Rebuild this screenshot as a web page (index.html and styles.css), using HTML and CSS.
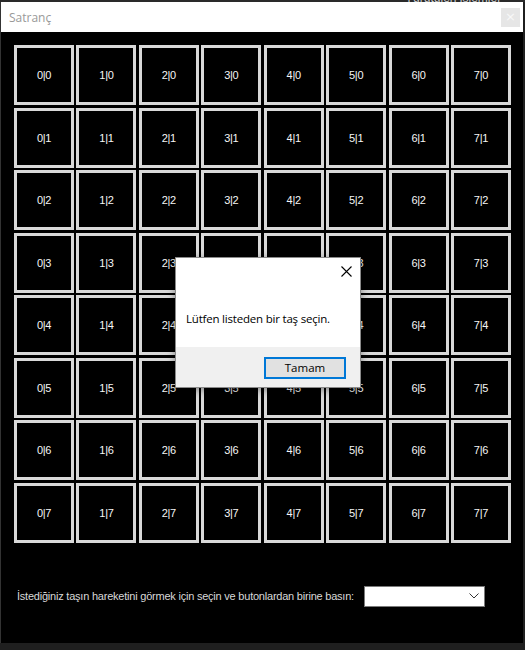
FILE: index.html
```html
<!DOCTYPE html>
<html lang="tr">
<head>
<meta charset="utf-8">
<title>Satranç</title>
<link rel="stylesheet" href="styles.css">
</head>
<body>
<div class="topstrip"><span class="peek">· Yürütülen işlemler</span></div>
<div class="window">
  <div class="titlebar">
    <span class="title">Satranç</span>
    <span class="closebtn">×</span>
  </div>
  <div class="client">
    <div class="board">
      <div class="cell">0|0</div><div class="cell">1|0</div><div class="cell">2|0</div><div class="cell">3|0</div><div class="cell">4|0</div><div class="cell">5|0</div><div class="cell">6|0</div><div class="cell">7|0</div>
      <div class="cell">0|1</div><div class="cell">1|1</div><div class="cell">2|1</div><div class="cell">3|1</div><div class="cell">4|1</div><div class="cell">5|1</div><div class="cell">6|1</div><div class="cell">7|1</div>
      <div class="cell">0|2</div><div class="cell">1|2</div><div class="cell">2|2</div><div class="cell">3|2</div><div class="cell">4|2</div><div class="cell">5|2</div><div class="cell">6|2</div><div class="cell">7|2</div>
      <div class="cell">0|3</div><div class="cell">1|3</div><div class="cell">2|3</div><div class="cell">3|3</div><div class="cell">4|3</div><div class="cell">5|3</div><div class="cell">6|3</div><div class="cell">7|3</div>
      <div class="cell">0|4</div><div class="cell">1|4</div><div class="cell">2|4</div><div class="cell">3|4</div><div class="cell">4|4</div><div class="cell">5|4</div><div class="cell">6|4</div><div class="cell">7|4</div>
      <div class="cell">0|5</div><div class="cell">1|5</div><div class="cell">2|5</div><div class="cell">3|5</div><div class="cell">4|5</div><div class="cell">5|5</div><div class="cell">6|5</div><div class="cell">7|5</div>
      <div class="cell">0|6</div><div class="cell">1|6</div><div class="cell">2|6</div><div class="cell">3|6</div><div class="cell">4|6</div><div class="cell">5|6</div><div class="cell">6|6</div><div class="cell">7|6</div>
      <div class="cell">0|7</div><div class="cell">1|7</div><div class="cell">2|7</div><div class="cell">3|7</div><div class="cell">4|7</div><div class="cell">5|7</div><div class="cell">6|7</div><div class="cell">7|7</div>
    </div>
    <div class="controls">
      <span class="label">İstediğiniz taşın hareketini görmek için seçin ve butonlardan birine basın:</span>
      <div class="combo">
        <svg class="chev" width="10" height="6" viewBox="0 0 10 6"><path d="M0.5 0.5 L5 5 L9.5 0.5" fill="none" stroke="#333" stroke-width="1"/></svg>
      </div>
    </div>
  </div>
</div>
<div class="dialog">
  <div class="dlg-body">
    <svg class="dlg-x" width="11" height="11" viewBox="0 0 11 11"><path d="M0.5 0.5 L10.5 10.5 M10.5 0.5 L0.5 10.5" stroke="#000" stroke-width="1.1"/></svg>
    <p class="dlg-msg">Lütfen listeden bir taş seçin.</p>
  </div>
  <div class="dlg-foot">
    <button class="dlg-btn">Tamam</button>
  </div>
</div>
</body>
</html>
```
FILE: styles.css
```css
html, body {
  margin: 0;
  padding: 0;
  background: #1f1f1f;
  width: 525px;
  height: 650px;
  overflow: hidden;
}
body {
  position: relative;
  font-family: "Liberation Sans", Arial, sans-serif;
}
.topstrip {
  height: 2px;
  background: #2a2a2a;
  position: relative;
  overflow: hidden;
}
.peek {
  position: absolute;
  left: 398px;
  top: -9px;
  font-size: 12px;
  color: #cfcfcf;
  white-space: nowrap;
}
.window {
  width: 522px;
  border-left: 1px solid #333;
}
.titlebar {
  height: 30px;
  background: #ffffff;
  display: flex;
  align-items: center;
  justify-content: space-between;
  padding: 0 3px 0 8px;
}
.title {
  font-family: "Open Sans", "Noto Sans", sans-serif;
  font-size: 12px;
  color: #999999;
}
.closebtn {
  width: 19px;
  height: 19px;
  background: #e6e6e6;
  color: #f8f8f8;
  font-size: 13px;
  line-height: 18px;
  text-align: center;
  font-family: "DejaVu Sans", sans-serif;
}
.client {
  background: #000000;
  height: 611px;
  padding: 13px 0 0 13px;
  box-sizing: border-box;
}
.board {
  display: grid;
  grid-template-columns: repeat(8, 60px);
  grid-auto-rows: 60px;
  column-gap: 2.43px;
  row-gap: 2.5px;
}
.cell {
  box-sizing: border-box;
  border: 3px solid #d9d9d9;
  display: flex;
  align-items: center;
  justify-content: center;
  color: #f6f6f6;
  font-size: 11px;
  letter-spacing: -0.3px;
}
.controls {
  display: flex;
  align-items: center;
  margin-top: 43px;
  padding-left: 3px;
  gap: 10px;
}
.label {
  font-size: 11px;
  letter-spacing: -0.22px;
  color: #d8d8d8;
  white-space: nowrap;
}
.combo {
  box-sizing: border-box;
  width: 121px;
  height: 21px;
  flex: none;
  background: #ffffff;
  border: 1px solid #7a7a7a;
  display: flex;
  align-items: center;
  justify-content: flex-end;
  padding-right: 5px;
}
.dialog {
  position: absolute;
  left: 175px;
  top: 257px;
  width: 186px;
  height: 131px;
  box-sizing: border-box;
  border: 1px solid #8a8a8a;
  background: #ffffff;
  display: flex;
  flex-direction: column;
  box-shadow: 0 2px 8px rgba(0,0,0,0.4);
}
.dlg-body {
  position: relative;
  height: 89px;
  background: #ffffff;
}
.dlg-x {
  position: absolute;
  right: 8px;
  top: 8px;
}
.dlg-msg {
  margin: 0;
  position: absolute;
  left: 10px;
  top: 53px;
  font-family: "Open Sans", "Noto Sans", sans-serif;
  font-size: 11.5px;
  color: #000;
  white-space: nowrap;
  letter-spacing: -0.2px;
}
.dlg-foot {
  flex: 1;
  background: #f0f0f0;
  display: flex;
  align-items: center;
  justify-content: flex-end;
  padding-right: 14px;
}
.dlg-btn {
  box-sizing: border-box;
  width: 82px;
  height: 22px;
  margin-top: 1px;
  border: 2px solid #0078d7;
  background: #e1e1e1;
  font-family: "Open Sans", "Noto Sans", sans-serif;
  font-size: 11.5px;
  color: #000;
  padding: 0;
  line-height: 16px;
}
```
